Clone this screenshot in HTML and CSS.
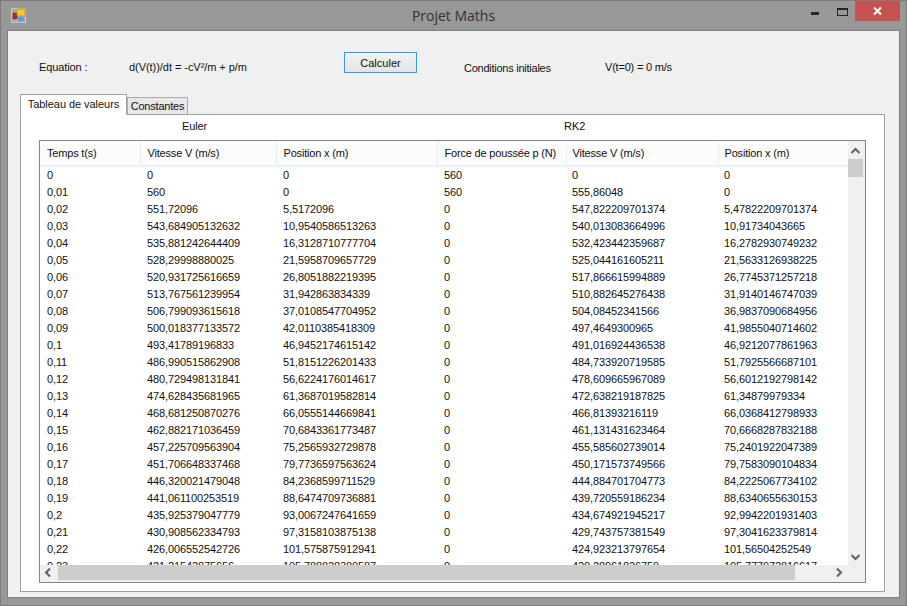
FILE: index.html
```html
<!DOCTYPE html>
<html lang="fr">
<head>
<meta charset="utf-8">
<title>Projet Maths</title>
<link rel="stylesheet" href="styles.css">
</head>
<body>
<div class="window">
  <header class="titlebar">
    <div class="title-left">
      <svg class="app-icon" width="16" height="16" viewBox="0 0 16 16">
        <rect x="0.5" y="0.5" width="14" height="14" fill="#a8a8a8" stroke="#c4c4c4"/>
        <path d="M5.5 1v13M1 5h4M1 12h4M5.5 11h9" stroke="#c4c4c4" fill="none"/>
        <rect x="2" y="5" width="4" height="6" fill="#c8281e" stroke="#7d1a12" stroke-width="0.6"/>
        <rect x="6" y="1" width="8" height="7" fill="#f6c93a" stroke="#b8860b" stroke-width="0.8"/>
        <rect x="7" y="9" width="6" height="4" fill="#5b93e6" stroke="#86aeea" stroke-width="0.6"/>
      </svg>
    </div>
    <div class="title-text">Projet Maths</div>
    <div class="controls">
      <svg class="ctl-min" width="8" height="3" viewBox="0 0 8 3"><rect width="8" height="3" fill="#242424"/></svg>
      <svg class="ctl-max" width="11" height="8" viewBox="0 0 11 8"><rect x="0.5" y="1" width="10" height="6.5" fill="none" stroke="#242424"/><rect width="11" height="2" fill="#242424"/></svg>
      <div class="ctl-close">
        <svg width="9" height="8" viewBox="0 0 9 8"><path d="M1 0.5l7 7M8 0.5l-7 7" stroke="#fff" stroke-width="2" fill="none"/></svg>
      </div>
    </div>
  </header>
  <main class="client">
    <section class="topline">
      <span class="lbl-equation">Equation :</span>
      <span class="lbl-formula">d(V(t))/dt = -cV²/m + p/m</span>
      <button class="calc" type="button">Calculer</button>
      <span class="lbl-cond">Conditions initiales</span>
      <span class="lbl-init">V(t=0) = 0 m/s</span>
    </section>
    <nav class="tabs">
      <div class="tab active">Tableau de valeurs</div>
      <div class="tab">Constantes</div>
    </nav>
    <section class="panel">
      <div class="groups">
        <span class="grp-euler">Euler</span>
        <span class="grp-rk">RK2</span>
      </div>
      <div class="grid">
        <div class="viewport">
          <table class="data">
            <thead>
              <tr><th class="c1">Temps t(s)</th><th class="c2">Vitesse V (m/s)</th><th class="c3">Position x (m)</th><th class="c4">Force de poussée p (N)</th><th class="c5">Vitesse V (m/s)</th><th class="c6">Position x (m)</th></tr>
            </thead>
            <tbody>
              <tr><td>0</td><td>0</td><td>0</td><td>560</td><td>0</td><td>0</td></tr>
              <tr><td>0,01</td><td>560</td><td>0</td><td>560</td><td>555,86048</td><td>0</td></tr>
              <tr><td>0,02</td><td>551,72096</td><td>5,5172096</td><td>0</td><td>547,822209701374</td><td>5,47822209701374</td></tr>
              <tr><td>0,03</td><td>543,684905132632</td><td>10,9540586513263</td><td>0</td><td>540,013083664996</td><td>10,91734043665</td></tr>
              <tr><td>0,04</td><td>535,881242644409</td><td>16,3128710777704</td><td>0</td><td>532,423442359687</td><td>16,2782930749232</td></tr>
              <tr><td>0,05</td><td>528,29998880025</td><td>21,5958709657729</td><td>0</td><td>525,044161605211</td><td>21,5633126938225</td></tr>
              <tr><td>0,06</td><td>520,931725616659</td><td>26,8051882219395</td><td>0</td><td>517,866615994889</td><td>26,7745371257218</td></tr>
              <tr><td>0,07</td><td>513,767561239954</td><td>31,942863834339</td><td>0</td><td>510,882645276438</td><td>31,9140146747039</td></tr>
              <tr><td>0,08</td><td>506,799093615618</td><td>37,0108547704952</td><td>0</td><td>504,08452341566</td><td>36,9837090684956</td></tr>
              <tr><td>0,09</td><td>500,018377133572</td><td>42,0110385418309</td><td>0</td><td>497,4649300965</td><td>41,9855040714602</td></tr>
              <tr><td>0,1</td><td>493,41789196833</td><td>46,9452174615142</td><td>0</td><td>491,016924436538</td><td>46,9212077861963</td></tr>
              <tr><td>0,11</td><td>486,990515862908</td><td>51,8151226201433</td><td>0</td><td>484,733920719585</td><td>51,7925566687101</td></tr>
              <tr><td>0,12</td><td>480,729498131841</td><td>56,6224176014617</td><td>0</td><td>478,609665967089</td><td>56,6012192798142</td></tr>
              <tr><td>0,13</td><td>474,628435681965</td><td>61,3687019582814</td><td>0</td><td>472,638219187825</td><td>61,34879979334</td></tr>
              <tr><td>0,14</td><td>468,681250870276</td><td>66,0555144669841</td><td>0</td><td>466,81393216119</td><td>66,0368412798933</td></tr>
              <tr><td>0,15</td><td>462,882171036459</td><td>70,6843361773487</td><td>0</td><td>461,131431623464</td><td>70,6668287832188</td></tr>
              <tr><td>0,16</td><td>457,225709563904</td><td>75,2565932729878</td><td>0</td><td>455,585602739014</td><td>75,2401922047389</td></tr>
              <tr><td>0,17</td><td>451,706648337468</td><td>79,7736597563624</td><td>0</td><td>450,171573749566</td><td>79,7583090104834</td></tr>
              <tr><td>0,18</td><td>446,320021479048</td><td>84,2368599711529</td><td>0</td><td>444,884701704773</td><td>84,2225067734102</td></tr>
              <tr><td>0,19</td><td>441,061100253519</td><td>88,6474709736881</td><td>0</td><td>439,720559186234</td><td>88,6340655630153</td></tr>
              <tr><td>0,2</td><td>435,925379047779</td><td>93,0067247641659</td><td>0</td><td>434,674921945217</td><td>92,9942201931403</td></tr>
              <tr><td>0,21</td><td>430,908562334793</td><td>97,3158103875138</td><td>0</td><td>429,743757381549</td><td>97,3041623379814</td></tr>
              <tr><td>0,22</td><td>426,006552542726</td><td>101,575875912941</td><td>0</td><td>424,923213797654</td><td>101,56504252549</td></tr>
              <tr><td>0,23</td><td>421,21542875656</td><td>105,788828380587</td><td>0</td><td>420,28961826759</td><td>105,777972816617</td></tr>
            </tbody>
          </table>
        </div>
        <div class="vscroll">
          <svg width="15" height="10" viewBox="0 0 15 10"><path d="M3.5 7l4-4 4 4" stroke="#606060" stroke-width="2" fill="none"/></svg>
          <div class="vthumb"></div>
          <div class="spacer"></div>
          <svg width="15" height="10" viewBox="0 0 15 10"><path d="M3.5 3l4 4 4-4" stroke="#606060" stroke-width="2" fill="none"/></svg>
        </div>
        <div class="hscroll">
          <svg class="arrow-l" width="18" height="15" viewBox="0 0 18 15"><path d="M10 3.5l-4 4 4 4" stroke="#606060" stroke-width="2" fill="none"/></svg>
          <div class="hthumb"></div>
          <div class="spacer"></div>
          <svg class="arrow-r" width="17" height="15" viewBox="0 0 17 15"><path d="M6 3.5l4 4-4 4" stroke="#606060" stroke-width="2" fill="none"/></svg>
        </div>
        <div class="corner"></div>
      </div>
    </section>
  </main>
</div>
</body>
</html>
```
FILE: styles.css
```css
* { box-sizing: border-box; }
html, body { margin: 0; padding: 0; }
body {
  width: 907px;
  height: 606px;
  overflow: hidden;
  font-family: "Liberation Sans", Arial, sans-serif;
  font-size: 11px;
  color: #111;
}
.window {
  width: 907px;
  height: 606px;
  background: #989898;
  border: 1px solid #7c7c7c;
  display: flex;
  flex-direction: column;
}
.titlebar {
  height: 29px;
  display: grid;
  grid-template-columns: 1fr auto 1fr;
  flex: none;
}
.title-left { padding: 7px 0 0 10px; }
.app-icon { display: block; }
.title-text {
  font-family: "Open Sans", sans-serif;
  font-size: 14px;
  line-height: 29px;
  color: #333;
}
.controls { display: flex; justify-content: flex-end; align-items: flex-start; padding-right: 6px; }
.ctl-min { margin: 11px 18px 0 0; }
.ctl-max { margin: 7px 7px 0 0; }
.ctl-close {
  width: 45px;
  height: 20px;
  background: #c75050;
  display: flex;
  align-items: center;
  justify-content: center;
}
.client {
  flex: none;
  width: 893px;
  height: 568px;
  margin-left: 6px;
  background: #f0f0f0;
  border: 1px solid #7f7f7f;
  padding-left: 12px;
}
.topline {
  height: 63px;
  display: flex;
  align-items: flex-start;
}
.lbl-equation { width: 90px; margin: 30px 0 0 19px; letter-spacing: -0.1px; }
.lbl-formula { width: 215px; margin-top: 30px; letter-spacing: -0.05px; }
.calc {
  width: 73px;
  height: 21px;
  margin-top: 21px;
  border: 1px solid #3399ff;
  background: linear-gradient(#f2f2f2, #e4e4e4);
  font: 11px "Liberation Sans", Arial, sans-serif;
  color: #111;
  padding: 0;
}
.lbl-cond { width: 140px; margin: 31px 0 0 47px; letter-spacing: -0.25px; }
.lbl-init { margin: 30px 0 0 1px; letter-spacing: -0.2px; }
.tabs { display: flex; align-items: flex-end; height: 21px; position: relative; z-index: 1; margin-bottom: -1px; }
.tab {
  height: 18px;
  width: 61px;
  border: 1px solid #acacac;
  border-bottom: 1px solid #a0a0a0;
  background: #e8e8e8;
  text-align: center;
  line-height: 17px;
  letter-spacing: -0.2px;
}
.tab.active {
  height: 21px;
  width: 107px;
  background: #fff;
  border-color: #a0a0a0;
  border-bottom-color: #fff;
  line-height: 18px;
  letter-spacing: -0.05px;
}
.panel {
  width: 865px;
  height: 478px;
  background: #fff;
  border: 1px solid #a0a0a0;
  padding: 0 18px;
}
.groups { height: 25px; display: flex; line-height: 23px; }
.grp-euler { margin-left: 143px; width: 382px; letter-spacing: -0.1px; }
.grid {
  width: 827px;
  height: 443px;
  border: 1px solid #828790;
  display: grid;
  grid-template-columns: 808px 17px;
  grid-template-rows: 424px 17px;
}
.viewport { overflow: hidden; background: #fff; }
.data { border-collapse: collapse; table-layout: fixed; width: 808px; }
.data th {
  height: 25px;
  font-weight: normal;
  text-align: left;
  padding: 0 0 0 7px;
  background: #fcfcfc;
  border-right: 1px solid #e3edf9;
  border-bottom: 2px solid #e8f0fb;
  white-space: nowrap;
  overflow: hidden;
  letter-spacing: -0.18px;
}
.data td { height: 17px; padding: 0 0 0 7px; white-space: nowrap; line-height: 17px; letter-spacing: -0.12px; }
.data th:nth-child(5), .data td:nth-child(5),
.data th:nth-child(6), .data td:nth-child(6) { padding-left: 6px; }
.c1 { width: 100px; }
.c2 { width: 136px; }
.c3 { width: 161px; }
.c4 { width: 129px; }
.c5 { width: 152px; }
.c6 { width: 130px; }
.vscroll { background: #f0f0f0; display: flex; flex-direction: column; padding-top: 5px; }
.vscroll svg, .hscroll svg { flex: none; display: block; }
.vthumb { width: 15px; height: 18px; background: #cdcdcd; margin-top: 3px; flex: none; }
.spacer { flex: 1; }
.vscroll svg:last-child { margin-bottom: 3px; }
.hscroll { background: #f0f0f0; display: flex; align-items: flex-start; }
.hthumb { width: 737px; height: 15px; background: #cdcdcd; }
.corner { background: #f0f0f0; }
```
